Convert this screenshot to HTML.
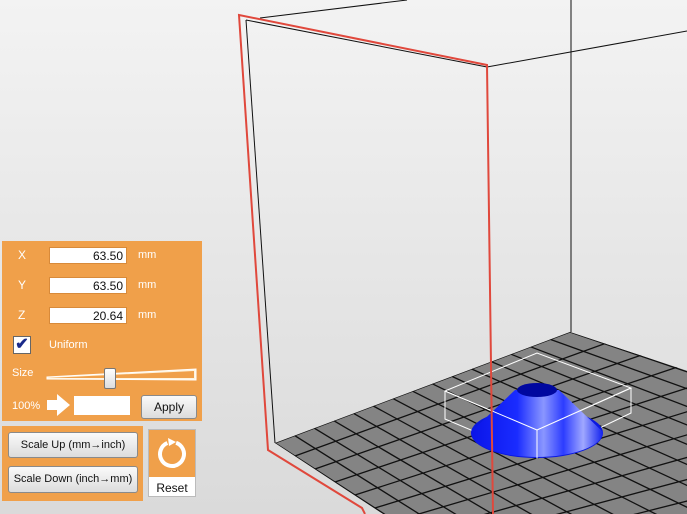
<!DOCTYPE html>
<html><head><meta charset="utf-8"><style>
html,body{margin:0;width:687px;height:514px;overflow:hidden}
body{position:relative;font-family:"Liberation Sans",sans-serif;background:linear-gradient(#f3f3f3,#dadada);}
svg{position:absolute;left:0;top:0}
.p{position:absolute;background:#f0a04a}
.l{position:absolute;color:#fff;font-size:12px}
.in{position:absolute;background:#fff;border:1px solid #d88a3a;height:17px;width:78px;text-align:right;font-size:12px;line-height:17px;box-sizing:border-box;padding-right:3px;color:#111}
.mm{position:absolute;color:#fff;font-size:11px}
.btn{position:absolute;background:linear-gradient(#fafafa,#dcdcdc);border:1px solid #8a8a8a;border-radius:3px;font-size:11px;color:#111;text-align:center;box-sizing:border-box}
</style></head><body>
<svg width="687" height="514" id="sv">
<defs>
<clipPath id="fl"><polygon points="275,443 570,332 1120,514 383,514"/></clipPath>
<linearGradient id="cg" x1="0" x2="1">
<stop offset="0" stop-color="#0a14e8"/><stop offset="0.35" stop-color="#1a2cff"/><stop offset="0.55" stop-color="#8a96ff"/><stop offset="0.7" stop-color="#2c3cff"/><stop offset="0.85" stop-color="#a0a8ff"/><stop offset="1" stop-color="#1020ee"/></linearGradient>
</defs>
<polygon points="275,443 570,332 1120,514 383,514" fill="#848484"/>
<g id="grid" clip-path="url(#fl)" stroke="#111" stroke-width="1.3"></g>
<g stroke="#111" stroke-width="1" fill="none">
<line x1="246" y1="20" x2="275" y2="443"/>
<line x1="246" y1="20" x2="487" y2="67"/>
<line x1="260" y1="18" x2="407" y2="0"/>
<line x1="487" y1="67" x2="687" y2="31"/>
<line x1="571" y1="0" x2="571" y2="332"/>
</g>
<g stroke="#fff" stroke-width="1" fill="none">
<polygon points="445,391 537,353 631,388 537,430"/>
<polyline points="445,391 445,419 537,458 631,413 631,388"/>
<line x1="537" y1="430" x2="537" y2="458"/>
</g>
<ellipse cx="537" cy="433" rx="66" ry="25" fill="#0a18e0"/>
<path d="M471,432 L515,390 L559,390 L603,432 A66,25 0 0 1 471,432Z" fill="url(#cg)"/>
<ellipse cx="537" cy="390" rx="20" ry="7" fill="#0008a0"/>
<g stroke="#fff" stroke-width="1" fill="none">
<line x1="445" y1="391" x2="537" y2="430"/><line x1="537" y1="430" x2="631" y2="388"/>
<line x1="537" y1="430" x2="537" y2="458"/>
</g>
<g stroke="#e0483c" stroke-width="2" fill="none">
<polyline points="493,514 487,65 239,15 268,450 362,508 365,514"/>
</g>
</svg>
<script>
var g=document.getElementById('grid'),s='';
for(var i=0;i<=16;i++){var u=i/15,bx=275+295*u,by=443-111*u,k=0.65-0.31*u,L=300;s+='<line x1="'+bx+'" y1="'+by+'" x2="'+(bx+L)+'" y2="'+(by+L*k)+'"/>';}
for(var j=0;j<=14;j++){var lx=275+20*j,ly=443+13*j;s+='<line x1="'+lx+'" y1="'+ly+'" x2="'+(lx+590)+'" y2="'+(ly-222+j*8)+'"/>';}
g.innerHTML=s;
</script>
<div class="p" style="left:2px;top:241px;width:200px;height:180px"></div>
<div class="l" style="left:18px;top:248px">X</div><div class="in" style="left:49px;top:247px">63.50</div><div class="mm" style="left:138px;top:249px">mm</div>
<div class="l" style="left:18px;top:278px">Y</div><div class="in" style="left:49px;top:277px">63.50</div><div class="mm" style="left:138px;top:279px">mm</div>
<div class="l" style="left:18px;top:308px">Z</div><div class="in" style="left:49px;top:307px">20.64</div><div class="mm" style="left:138px;top:309px">mm</div>
<div style="position:absolute;left:13px;top:336px;width:18px;height:18px;background:#fff;border:1px solid #666;box-sizing:border-box;color:#1a2a8a;font-size:16px;line-height:16px;text-align:center;font-weight:bold">✔</div>
<div class="l" style="left:49px;top:339px;font-size:11px">Uniform</div>
<div class="l" style="left:12px;top:367px;font-size:11px">Size</div>
<svg width="687" height="514" style="pointer-events:none"><polygon points="47,377 196,369 196,380 47,379" fill="#fff4de" stroke="#fff"/><polygon points="47,378 194,371 194,378" fill="#f0a04a"/></svg>
<div style="position:absolute;left:104px;top:368px;width:12px;height:21px;background:linear-gradient(#fff,#ddd);border:1px solid #777;box-sizing:border-box;border-radius:2px"></div>
<div class="l" style="left:12px;top:400px;font-size:11px">100%</div>
<svg width="687" height="514" style="pointer-events:none"><polygon points="47,400 57,400 57,394 70,405 57,416 57,410 47,410" fill="#fff"/></svg>
<div style="position:absolute;left:74px;top:396px;width:56px;height:19px;background:#fff"></div>
<div class="btn" style="left:141px;top:395px;width:56px;height:24px;line-height:22px;font-size:12px">Apply</div>
<div class="p" style="left:2px;top:426px;width:141px;height:75px"></div>
<div class="btn" style="left:8px;top:432px;width:130px;height:26px;line-height:24px">Scale Up (mm→inch)</div>
<div class="btn" style="left:8px;top:466px;width:130px;height:27px;line-height:25px">Scale Down (inch→mm)</div>
<div style="position:absolute;left:148px;top:429px;width:48px;height:68px;background:#fff;border:1px solid #bbb;box-sizing:border-box"></div>
<div class="p" style="left:149px;top:430px;width:46px;height:47px"></div>
<svg width="687" height="514" style="pointer-events:none"><circle cx="172" cy="454" r="12" fill="none" stroke="#fff" stroke-width="4" stroke-dasharray="66 10" transform="rotate(-70 172 454)"/><polygon points="168,438 176,442 169,446" fill="#fff"/></svg>
<div style="position:absolute;left:148px;top:481px;width:48px;text-align:center;font-size:12px;color:#111">Reset</div>
</body></html>
